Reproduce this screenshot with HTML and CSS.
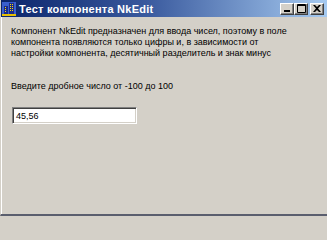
FILE: index.html
```html
<!DOCTYPE html>
<html lang="ru">
<head>
<meta charset="utf-8">
<title>Тест компонента NkEdit</title>
<link rel="stylesheet" href="styles.css">
</head>
<body>
<div class="window">
  <div class="titlebar">
    <svg class="app-icon" width="14" height="14" viewBox="0 0 14 14">
      <rect x="0" y="0" width="14" height="14" fill="#3a5fcd"/>
      <rect x="2" y="4" width="4" height="9" fill="#1a2a8a"/>
      <rect x="7" y="1" width="5" height="12" fill="#1a2a8a"/>
      <rect x="3" y="5" width="1" height="1" fill="#ffe000"/>
      <rect x="3" y="7" width="1" height="1" fill="#ffe000"/>
      <rect x="3" y="9" width="1" height="1" fill="#ffe000"/>
      <rect x="8" y="2" width="1" height="1" fill="#ffe000"/>
      <rect x="10" y="2" width="1" height="1" fill="#ffe000"/>
      <rect x="8" y="4" width="1" height="1" fill="#ffe000"/>
      <rect x="10" y="4" width="1" height="1" fill="#ffe000"/>
      <rect x="8" y="6" width="1" height="1" fill="#ffe000"/>
      <rect x="10" y="6" width="1" height="1" fill="#ffe000"/>
      <rect x="8" y="8" width="1" height="1" fill="#ffe000"/>
      <rect x="10" y="8" width="1" height="1" fill="#ffe000"/>
      <rect x="0" y="12" width="14" height="2" fill="#e8c000"/>
    </svg>
    <span class="title">Тест компонента NkEdit</span>
    <div class="caption-buttons">
      <div class="cbtn">
        <svg width="8" height="7" viewBox="0 0 8 7"><rect x="1" y="5" width="6" height="2" fill="#000"/></svg>
      </div>
      <div class="cbtn">
        <svg width="9" height="9" viewBox="0 0 9 9"><path d="M0.5 0.5H8.5V8.5H0.5Z M0.5 1.5H8.5" fill="none" stroke="#000"/></svg>
      </div>
      <div class="cbtn cbtn-close">
        <svg width="8" height="7" viewBox="0 0 8 7"><path d="M0 0H2L4 2L6 0H8L5 3.5L8 7H6L4 5L2 7H0L3 3.5Z" fill="#000"/></svg>
      </div>
    </div>
  </div>
  <div class="client">
    <p class="desc">Компонент NkEdit предназначен для ввода чисел, поэтому в поле<br>компонента появляются только цифры и, в зависимости от<br>настройки компонента, десятичный разделитель и знак минус</p>
    <p class="label">Введите дробное число от -100 до 100</p>
    <div class="edit">45,56</div>
  </div>
</div>
</body>
</html>
```
FILE: styles.css
```css
html, body {
  margin: 0;
  padding: 0;
  background: #d4d0c8;
}
.window {
  width: 327px;
  height: 216px;
  box-sizing: border-box;
  display: flex;
  flex-direction: column;
  background: #d4d0c8;
  border-left: 1px solid #d4d0c8;
  border-bottom: 2px solid #5a5e6e;
  font-family: "Liberation Sans", Arial, sans-serif;
  overflow: hidden;
}
.titlebar {
  height: 17px;
  display: flex;
  align-items: center;
  background: linear-gradient(to right, #0a246a 0%, #3a5a9e 45%, #a6caf0 100%);
  margin-left: -1px;
  padding-left: 2px;
  padding-right: 3px;
}
.app-icon {
  flex: none;
  width: 14px;
  height: 14px;
}
.title {
  margin-left: 3px;
  color: #fff;
  font-weight: bold;
  font-size: 11px;
  letter-spacing: 0.25px;
  white-space: nowrap;
  flex: 1;
}
.caption-buttons {
  display: flex;
  align-items: center;
}
.cbtn {
  width: 14px;
  height: 12px;
  box-sizing: border-box;
  background: #d4d0c8;
  border-top: 1px solid #fff;
  border-left: 1px solid #fff;
  border-right: 1px solid #404040;
  border-bottom: 1px solid #404040;
  box-shadow: inset -1px -1px 0 #808080;
  display: flex;
  align-items: center;
  justify-content: center;
}
.cbtn-close {
  margin-left: 2px;
}
.client {
  flex: 1;
  border-left: 1px solid #fff;
  padding: 9px 8px 0 9px;
  font-size: 9px;
  color: #000;
}
.desc {
  margin: 0;
  line-height: 11px;
  white-space: nowrap;
}
.label {
  margin: 22px 0 0 0;
  line-height: 11px;
  white-space: nowrap;
}
.edit {
  margin-top: 15px;
  margin-left: 1px;
  width: 125px;
  height: 17px;
  box-sizing: border-box;
  background: #fff;
  border-top: 1px solid #808080;
  border-left: 1px solid #808080;
  border-right: 1px solid #fff;
  border-bottom: 1px solid #fff;
  box-shadow: inset 1px 1px 0 #404040, inset -1px -1px 0 #d4d0c8;
  padding: 3px 0 0 3px;
  line-height: 11px;
  font-size: 9px;
}
```
